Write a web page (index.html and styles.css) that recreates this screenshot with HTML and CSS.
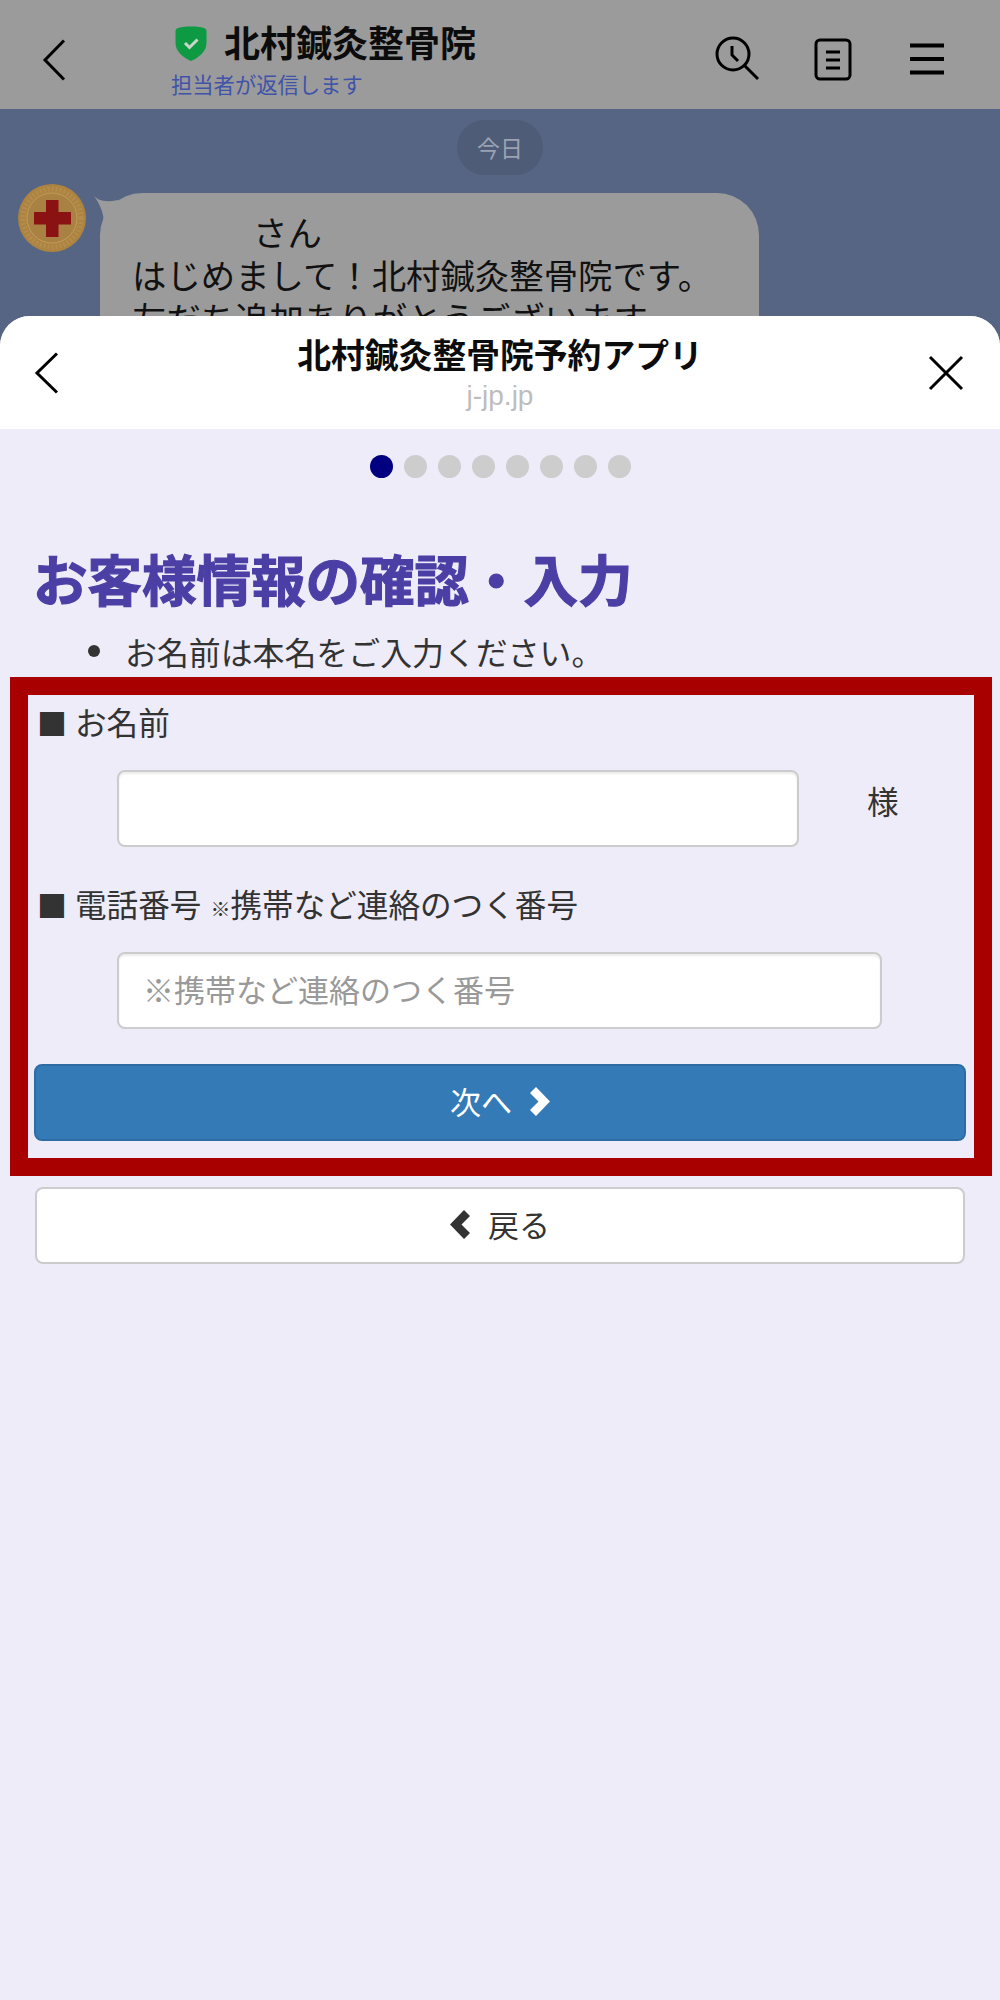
FILE: index.html
```html
<!DOCTYPE html>
<html lang="ja">
<head>
<meta charset="utf-8">
<title>北村鍼灸整骨院予約アプリ</title>
<link rel="stylesheet" href="styles.css">
</head>
<body>
<div class="app">
  <header class="topbar">
    <svg class="top-back" width="24" height="42" viewBox="0 0 24 42"><path d="M22 1.500 3 21l19 19.500" fill="none" stroke="#000" stroke-width="3"/></svg>
    <div class="room">
      <div class="room-name">
        <svg class="shield" width="32" height="35" viewBox="0 0 32 35"><path d="M16 0.500C22 0.500 27 1 30 2.500C31 3 31.500 4 31.500 5.500V17C31.500 26 23 32 16 35C9 32 0.500 26 0.500 17V5.500C0.500 4 1 3 2 2.500C5 1 10 0.500 16 0.500Z" fill="#0d9a43"/><path d="M10 17l4.500 4.500 8-8" fill="none" stroke="#c9d6cc" stroke-width="3"/></svg>
        <span class="room-title">北村鍼灸整骨院</span>
      </div>
      <div class="room-sub">担当者が返信します</div>
    </div>
    <div class="top-icons">
      <svg width="46" height="46" viewBox="0 0 46 46"><circle cx="18" cy="18" r="16" fill="none" stroke="#000" stroke-width="3"/><path d="M30 30 43 43M17 10v9l6 6" fill="none" stroke="#000" stroke-width="3"/></svg>
      <svg width="38" height="44" viewBox="0 0 38 44"><rect x="2" y="2" width="34" height="39" rx="4" fill="none" stroke="#000" stroke-width="3"/><path d="M12 14h14M12 22h14M12 30h14" stroke="#000" stroke-width="3"/></svg>
      <svg width="36" height="32" viewBox="0 0 36 32"><path d="M1 2.500h34M1 16h34M1 29.500h34" stroke="#000" stroke-width="4"/></svg>
    </div>
  </header>

  <section class="chat">
    <div class="date-pill">今日</div>
    <div class="msg">
      <svg class="avatar" width="68" height="68" viewBox="0 0 68 68">
        <circle cx="34" cy="34" r="34" fill="#ad8340"/>
        <circle cx="34" cy="34" r="29" fill="none" stroke="#b48c4c" stroke-width="5" stroke-dasharray="2 2"/>
        <circle cx="34" cy="34" r="25" fill="#a98142" stroke="#c29c5c" stroke-width="1"/>
        <path d="M28 16h12.500v12h12.500v12.500H40.500V53H28V40.500H16V28h12Z" fill="#8a1212"/>
      </svg>
      <div class="bubble">
        <svg class="tail" width="24" height="28" viewBox="0 0 24 28"><path d="M0 0C4 4 10 7 24 4V28H10C10 18 6 8 0 0Z" fill="#9b9b9b"/></svg>
        <p class="bubble-name">さん</p>
        <p>はじめまして！北村鍼灸整骨院です。</p>
        <p>友だち追加ありがとうございます。</p>
      </div>
    </div>
  </section>

  <main class="sheet">
    <div class="sheet-head">
      <svg class="sheet-back" width="24" height="42" viewBox="0 0 24 42"><path d="M23 1.500 3 21l20 19.500" fill="none" stroke="#000" stroke-width="3"/></svg>
      <div class="sheet-titles">
        <div class="sheet-title">北村鍼灸整骨院予約アプリ</div>
        <div class="sheet-domain">j-jp.jp</div>
      </div>
      <svg class="sheet-close" width="36" height="36" viewBox="0 0 36 36"><path d="M2 2 34 34M34 2 2 34" fill="none" stroke="#000" stroke-width="3"/></svg>
    </div>

    <div class="sheet-body">
      <div class="dots">
        <span class="dot dot-on"></span><span class="dot"></span><span class="dot"></span><span class="dot"></span><span class="dot"></span><span class="dot"></span><span class="dot"></span><span class="dot"></span>
      </div>
      <h1 class="page-title">お客様情報の確認・入力</h1>
      <ul class="notes"><li>お名前は本名をご入力ください。</li></ul>

      <form class="red-box">
        <div class="field-label"><span class="square">■</span>お名前</div>
        <div class="name-row">
          <input class="text-input name-input" type="text">
          <span class="honorific">様</span>
        </div>
        <div class="field-label label-phone"><span class="square">■</span>電話番号 <small class="note-mark">※</small>携帯など連絡のつく番号</div>
        <div class="phone-row">
          <input class="text-input phone-input" type="text" placeholder="※携帯など連絡のつく番号">
        </div>
        <button class="btn btn-next" type="button">次へ
          <svg width="20" height="29" viewBox="0 0 20 29"><path d="M6 0 20 14.500 6 29 0 23 8.500 14.500 0 6Z" fill="#fff"/></svg>
        </button>
      </form>

      <button class="btn btn-back" type="button">
        <svg width="20" height="29" viewBox="0 0 20 29"><path d="M14 0 0 14.500 14 29 20 23 11.500 14.500 20 6Z" fill="#333"/></svg>
        戻る
      </button>
    </div>
  </main>
</div>
</body>
</html>
```
FILE: styles.css
```css
* { box-sizing: border-box; }
html, body { margin: 0; padding: 0; }
body {
  font-family: "Noto Sans CJK JP", "Liberation Sans", sans-serif;
  background: #eeecf8;
  color: #333;
}
.app {
  position: relative;
  width: 1000px;
  height: 2000px;
  overflow: hidden;
}

/* LINE top bar */
.topbar {
  height: 109px;
  background: #9b9b9b;
  display: flex;
  align-items: flex-start;
  padding-left: 42px;
}
.top-back { margin-top: 39px; flex: none; }
.room { margin-left: 105px; padding-top: 26px; width: 500px; }
.room-name { display: flex; align-items: center; height: 35px; padding-left: 4px; }
.shield { flex: none; }
.room-title {
  margin-left: 17px;
  margin-top: -5px;
  font-size: 36px;
  font-weight: 700;
  line-height: 35px;
  color: #0c0c0c;
}
.room-sub {
  margin-top: 9px;
  font-size: 21.300px;
  line-height: 28px;
  color: #3f53a9;
}
.top-icons {
  margin-left: 44px;
  display: flex;
  align-items: flex-start;
  padding-top: 36px;
}
.top-icons svg { flex: none; display: block; }
.top-icons svg:nth-child(2) { margin-left: 53px; margin-top: 2px; }
.top-icons svg:nth-child(3) { margin-left: 57px; margin-top: 7px; }

/* Chat behind the sheet */
.chat {
  height: 240px;
  background: #566583;
  padding-top: 11px;
}
.date-pill {
  width: 86px;
  height: 55px;
  margin: 0 auto;
  border-radius: 28px;
  background: #4e5c78;
  color: #9ba3b3;
  font-size: 23px;
  line-height: 55px;
  text-align: center;
}
.msg {
  display: flex;
  align-items: flex-start;
  margin-top: 9px;
  padding-left: 18px;
}
.avatar { flex: none; }
.bubble {
  position: relative;
  margin-left: 14px;
  margin-top: 9px;
  width: 659px;
  height: 260px;
  padding: 17px 32px;
  background: #9b9b9b;
  border-radius: 42px;
  color: #111;
  font-size: 34.400px;
  line-height: 43px;
}
.bubble p { margin: 0; white-space: nowrap; }
.bubble-name { padding-left: 121px; }
.tail { position: absolute; left: -6px; top: 3px; }

/* Bottom sheet */
.sheet {
  position: absolute;
  left: 0;
  right: 0;
  top: 316px;
  bottom: 0;
  background: #eeecf8;
  border-radius: 30px 30px 0 0;
  overflow: hidden;
}
.sheet-head {
  position: relative;
  height: 113px;
  background: #fff;
}
.sheet-back { position: absolute; left: 34px; top: 36px; }
.sheet-close { position: absolute; left: 928px; top: 39px; }
.sheet-titles { text-align: center; padding-top: 16px; }
.sheet-title {
  font-size: 33.800px;
  font-weight: 700;
  line-height: 44px;
  color: #0c0c0c;
}
.sheet-domain {
  margin-top: 5px;
  font-family: "Liberation Sans", sans-serif;
  font-size: 28px;
  line-height: 30px;
  color: #bdbdbd;
}

.dots {
  display: flex;
  justify-content: center;
  gap: 11px;
  padding-top: 26px;
}
.dot { width: 23px; height: 23px; border-radius: 50%; background: #cdcdcd; }
.dot-on { background: #000080; }

.page-title {
  margin: 61px 0 0 33px;
  font-size: 54.500px;
  font-weight: 700;
  line-height: 78px;
  color: #4b3fa5;
  -webkit-text-stroke: 1.200px #4b3fa5;
}
.notes {
  margin: 12px 0 0;
  padding: 0 0 0 88px;
  list-style: none;
  font-size: 31.900px;
  line-height: 44px;
  height: 48px;
}
.notes li { display: flex; align-items: center; }
.notes li::before {
  content: "";
  flex: none;
  width: 12px;
  height: 12px;
  margin-right: 25px;
  border-radius: 50%;
  background: #333;
}

.red-box {
  margin: 0 0 0 10px;
  width: 982px;
  height: 499px;
  border: 18px solid #a80000;
  padding: 4px 8px 0 6px;
}
.field-label {
  font-size: 31.600px;
  line-height: 44px;
  color: #333;
  padding-left: 3px;
  white-space: nowrap;
}
.square { display: inline-block; width: 38px; font-size: 30px; }
.note-mark { font-size: 20px; margin-left: 2px; }
.label-phone { margin-top: 34px; }
.name-row { display: flex; align-items: center; margin-top: 26px; padding-left: 83px; }
.honorific { margin: 0 0 18px 68px; font-size: 31.600px; line-height: 44px; }
.phone-row { margin-top: 21px; padding-left: 83px; }
.text-input {
  display: block;
  height: 77px;
  border: 2px solid #ccc;
  border-radius: 8px;
  background: #fff;
  box-shadow: inset 0 2px 2px rgba(0, 0, 0, 0.075);
  font-family: inherit;
  font-size: 31px;
  padding: 0 24px 5px;
  color: #555;
}
.text-input::placeholder { color: #999; opacity: 1; }
.name-input { width: 682px; }
.phone-input { width: 765px; }

.btn {
  display: flex;
  align-items: center;
  justify-content: center;
  gap: 18px;
  height: 77px;
  border-radius: 8px;
  font-family: inherit;
  font-size: 31px;
  padding: 0 0 5px;
}
.btn svg { margin-top: 2px; }
.btn-next {
  width: 932px;
  margin-top: 35px;
  background: #337ab7;
  border: 2px solid #2e6da4;
  color: #fff;
}
.btn-back {
  width: 930px;
  margin: 11px 0 0 35px;
  background: #fff;
  border: 2px solid #ccc;
  color: #333;
}
```
